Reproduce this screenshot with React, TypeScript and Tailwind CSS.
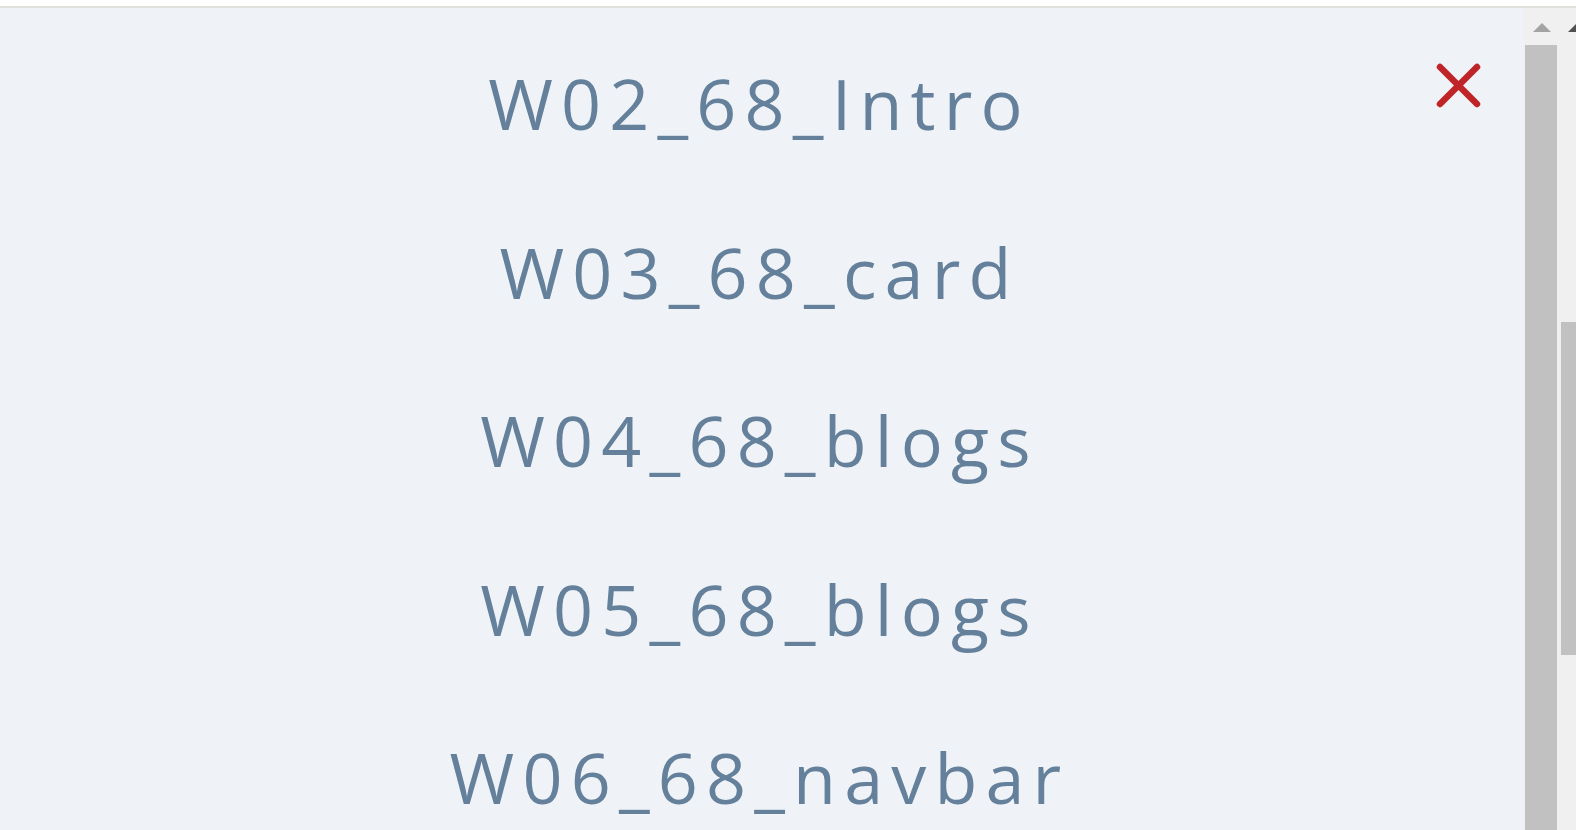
const modules = [
  "W02_68_Intro",
  "W03_68_card",
  "W04_68_blogs",
  "W05_68_blogs",
  "W06_68_navbar",
]

export default function App() {
  return (
    <div className="h-[830px] w-full overflow-hidden bg-white flex flex-col">
      <div className="h-[6px] shrink-0 bg-white" />
      <div className="h-[2px] shrink-0 bg-[#dfe0db]" />
      <div className="flex flex-1 min-h-0">
        {/* list panel */}
        <div className="relative flex-1 overflow-hidden bg-[#eff3f7] pt-[11px] pr-[4px]">
          <button className="absolute left-[1430px] top-[49px]">
            <svg width="57" height="57" viewBox="0 0 57 57">
              <line x1="10" y1="10" x2="47" y2="47" stroke="#bf2528" strokeWidth="6.5" strokeLinecap="round" />
              <line x1="47" y1="10" x2="10" y2="47" stroke="#bf2528" strokeWidth="6.5" strokeLinecap="round" />
            </svg>
          </button>
          <ul className="flex flex-col">
            {modules.map((m) => (
              <li
                key={m}
                className="text-center text-[70px] leading-[168.5px] tracking-[8.2px] text-[#64809b]"
                style={{ fontFamily: '"Open Sans", sans-serif' }}
              >
                {m}
              </li>
            ))}
          </ul>
        </div>

        {/* inner scrollbar */}
        <div className="w-[38px] shrink-0 bg-[#f0f0f0] flex flex-col">
          <div className="h-[37px] shrink-0 flex items-start justify-center pt-[15px]">
            <svg width="18" height="9" viewBox="0 0 18 9" className="block">
              <polygon points="0,9 9,0 18,9" fill="#a3a3a3" />
            </svg>
          </div>
          <div className="ml-[2px] w-[32px] flex-1 bg-[#c1c1c1]" />
        </div>

        {/* page scrollbar */}
        <div className="w-[15px] shrink-0 bg-[#f0f0f0] flex flex-col overflow-hidden">
          <div className="h-[314px] shrink-0 pt-[15px] pl-[7px]">
            <svg width="18" height="9" viewBox="0 0 18 9" className="block">
              <polygon points="0,9 9,0 18,9" fill="#505050" />
            </svg>
          </div>
          <div className="h-[333px] shrink-0 bg-[#c1c1c1]" />
        </div>
      </div>
    </div>
  )
}
